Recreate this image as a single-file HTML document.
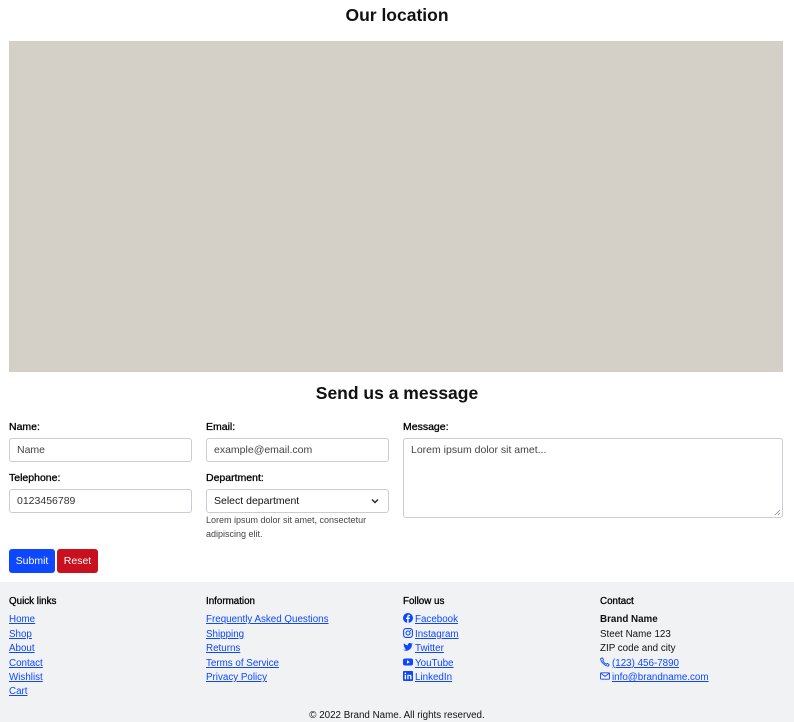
<!DOCTYPE html>
<html><head><meta charset="utf-8"><style>
*{box-sizing:border-box;margin:0;padding:0}
body{width:794px;height:722px;font-family:"Liberation Sans",sans-serif;color:#111;background:#fff;position:relative;overflow:hidden}
.abs{position:absolute}
h2{position:absolute;left:0;width:794px;text-align:center;font-size:17.5px;font-weight:bold;color:#111}
.lbl{position:absolute;font-size:10.5px;font-weight:normal;color:#000;-webkit-text-stroke:.3px #000}
.inp{position:absolute;height:24px;border:1px solid #c9ccd1;border-radius:3px;background:#fff;font-size:10.5px;color:#444;padding:5px 7px;line-height:12px}
.btn{position:absolute;top:549px;height:24px;border-radius:3px;color:#fff;font-size:10.5px;text-align:center;line-height:24px}
footer{position:absolute;left:0;top:582px;width:794px;height:140px;background:#f1f2f4}
.col{position:absolute;top:13px;font-size:9.8px;line-height:14.4px}
.col b{display:block;margin-bottom:4px;font-weight:normal;color:#000;-webkit-text-stroke:.3px #000}
.col a{color:#0d47ff;text-decoration:underline;display:block}
.col svg{width:10px;height:10px;vertical-align:-1px;margin-right:2px}
.col span{display:block}
</style></head><body>
<h2 style="top:5px">Our location</h2>
<div class="abs" style="left:9px;top:41px;width:774px;height:331px;background:#d4d0c8"></div>
<h2 style="top:383px">Send us a message</h2>

<div class="lbl" style="left:9px;top:421px">Name:</div>
<div class="inp" style="left:9px;top:438px;width:183px">Name</div>
<div class="lbl" style="left:206px;top:421px">Email:</div>
<div class="inp" style="left:206px;top:438px;width:183px">example@email.com</div>
<div class="lbl" style="left:403px;top:421px">Message:</div>
<div class="inp" style="left:403px;top:438px;width:380px;height:80px">Lorem ipsum dolor sit amet...
<svg class="abs" style="right:1px;bottom:1px" width="7" height="7" viewBox="0 0 7 7"><path d="M6 1L1 6M6 4L4 6" stroke="#888" stroke-width=".8"/></svg></div>

<div class="lbl" style="left:9px;top:472px">Telephone:</div>
<div class="inp" style="left:9px;top:489px;width:183px;color:#333">0123456789</div>
<div class="lbl" style="left:206px;top:472px">Department:</div>
<div class="inp" style="left:206px;top:489px;width:183px;color:#111">Select department
<svg class="abs" style="right:9px;top:8px" width="8" height="6" viewBox="0 0 8 6"><path d="M1 1.5L4 4.5L7 1.5" fill="none" stroke="#222" stroke-width="1.4"/></svg></div>
<div class="abs" style="left:206px;top:513px;font-size:9px;line-height:14px;color:#444;width:180px">Lorem ipsum dolor sit amet, consectetur adipiscing elit.</div>

<div class="btn" style="left:9px;width:46px;background:#0d47ff">Submit</div>
<div class="btn" style="left:57px;width:41px;background:#c8101e">Reset</div>

<footer>
<div class="col" style="left:9px"><b>Quick links</b><a>Home</a><a>Shop</a><a>About</a><a>Contact</a><a>Wishlist</a><a>Cart</a></div>
<div class="col" style="left:206px"><b>Information</b><a>Frequently Asked Questions</a><a>Shipping</a><a>Returns</a><a>Terms of Service</a><a>Privacy Policy</a></div>
<div class="col" style="left:403px"><b>Follow us</b>
<a><svg viewBox="0 0 10 10"><circle cx="5" cy="5" r="5" fill="#0d47ff"/><path d="M5.6 10V6h1.2l.2-1.4H5.6v-.8c0-.4.1-.7.7-.7H7V1.9C6.8 1.9 6.4 1.8 6 1.8c-1 0-1.8.6-1.8 1.8v1H3V6h1.2v4z" fill="#fff"/></svg>Facebook</a>
<a><svg viewBox="0 0 10 10"><rect x=".6" y=".6" width="8.8" height="8.8" rx="2.4" fill="none" stroke="#0d47ff" stroke-width="1.1"/><circle cx="5" cy="5" r="2" fill="none" stroke="#0d47ff" stroke-width="1.1"/><circle cx="7.5" cy="2.5" r=".6" fill="#0d47ff"/></svg>Instagram</a>
<a><svg viewBox="0 0 10 10"><path d="M10 1.9c-.4.2-.8.3-1.2.3.4-.3.8-.7.9-1.1-.4.2-.9.4-1.3.5C7.9 1.2 7.4 1 6.9 1 5.7 1 4.8 2 5 3.3 3.3 3.2 1.9 2.4.9 1.2.4 2.1.7 3.3 1.6 3.8c-.3 0-.6-.1-.9-.2 0 1 .7 1.8 1.6 2-.3.1-.6.1-.9 0 .3.8 1 1.4 1.9 1.4C2.5 7.6 1.3 8 0 7.8c.9.6 2 .9 3.1.9 3.8 0 5.9-3.2 5.8-6.1.4-.3.8-.7 1.1-1.1z" fill="#0d47ff"/></svg>Twitter</a>
<a><svg viewBox="0 0 10 10"><rect x="0" y="1.5" width="10" height="7" rx="2" fill="#0d47ff"/><path d="M4 3.3v3.4L6.8 5z" fill="#fff"/></svg>YouTube</a>
<a><svg viewBox="0 0 10 10"><rect width="10" height="10" rx="1" fill="#0d47ff"/><rect x="1.7" y="3.8" width="1.4" height="4.5" fill="#fff"/><circle cx="2.4" cy="2.3" r=".8" fill="#fff"/><path d="M4.3 3.8h1.3v.7c.3-.5.8-.8 1.5-.8 1.2 0 1.4.8 1.4 1.8v2.8H7.1V5.8c0-.5 0-1-.7-1s-.8.5-.8 1v2.5H4.3z" fill="#fff"/></svg>LinkedIn</a></div>
<div class="col" style="left:600px"><b>Contact</b><span style="font-weight:bold">Brand Name</span><span>Steet Name 123</span><span>ZIP code and city</span>
<a><svg viewBox="0 0 10 10"><path d="M2.2.8L3.6 2.5 2.8 3.6C3.4 5 4.9 6.6 6.4 7.2l1.1-.8 1.7 1.4-.9 1.4C4.9 9 1 5.2.6 1.8z" fill="none" stroke="#0d47ff" stroke-width=".9" stroke-linejoin="round"/></svg>(123) 456-7890</a>
<a><svg viewBox="0 0 10 10"><rect x=".5" y="1.8" width="9" height="6.4" rx=".8" fill="none" stroke="#0d47ff" stroke-width=".9"/><path d="M.8 2.3L5 5.4l4.2-3.1" fill="none" stroke="#0d47ff" stroke-width=".9"/></svg>info@brandname.com</a></div>
<div class="abs" style="left:0;width:794px;top:128px;text-align:center;font-size:9.8px">© 2022 Brand Name. All rights reserved.</div>
</footer>
</body></html>
